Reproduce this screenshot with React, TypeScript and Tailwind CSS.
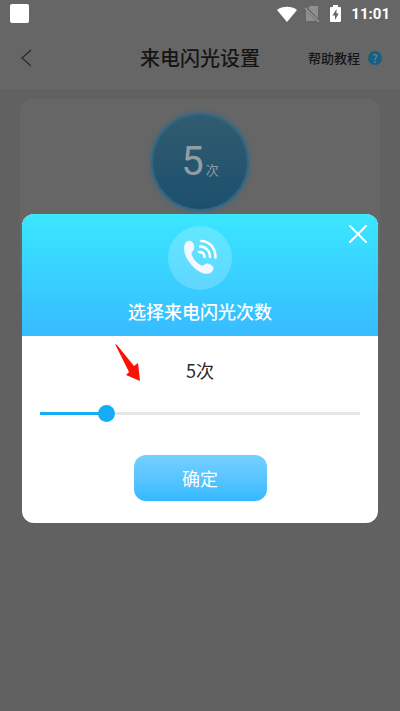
import { useState } from "react"

const MAX_FLASHES = 26

function StatusBar() {
  return (
    <div className="flex h-[27px] items-center justify-between px-2.5 text-white">
      <span className="size-[19px] rounded-xs bg-white" />
      <div className="flex items-center gap-2">
        <svg className="h-4 w-5" viewBox="0 0 20 16" fill="currentColor" aria-hidden="true">
          <path d="M10 16 0 4C5.500-.4 14.500-.4 20 4Z" />
        </svg>
        <svg className="h-4 w-[15px]" viewBox="0 0 15 16" aria-hidden="true">
          <path d="M5 0h8v15H1V4Z" fill="#8f8f8f" />
          <path d="M0 1 14 16" stroke="#666" strokeWidth="3" />
          <path d="M0 2 14 16" stroke="#9a9a9a" strokeWidth="1.300" />
        </svg>
        <svg className="mx-0.5 h-[17px] w-[11px]" viewBox="0 0 11 17" aria-hidden="true">
          <path d="M3 0h5v2h2q1 0 1 1v13q0 1-1 1H1q-1 0-1-1V3q0-1 1-1h2Z" fill="currentColor" />
          <path d="M6.500 4 2.500 10.500H5V15L8.700 8.500H6.500Z" fill="#666" />
        </svg>
        <span className="font-['Roboto',sans-serif] text-[15px] leading-5 font-bold">11:01</span>
      </div>
    </div>
  )
}

function Header() {
  return (
    <header className="grid h-[62px] grid-cols-[1fr_auto_1fr] items-center px-[18px]">
      <button type="button" aria-label="返回" className="justify-self-start text-[#303030]">
        <svg className="h-[18px] w-4" viewBox="0 0 16 18" fill="none" stroke="currentColor" strokeWidth="1.500">
          <path d="M13 1 4 9l9 8" />
        </svg>
      </button>
      <h1 className="text-xl leading-7 font-medium text-[#151515]">来电闪光设置</h1>
      <a href="#help" className="flex items-center gap-2 justify-self-end text-[13px] leading-5 font-medium whitespace-nowrap text-[#151515]">
        帮助教程
        <span className="flex size-3.5 items-center justify-center rounded-full bg-[#175f83] text-[11px] text-[#6b8996]">
          ?
        </span>
      </a>
    </header>
  )
}

function PhoneIcon() {
  return (
    <svg className="size-16" viewBox="0 0 64 64" fill="none" aria-hidden="true">
      <circle cx="32" cy="32" r="32" fill="#fff" fillOpacity=".2" />
      <path
        d="M17.500 17c1.500-2.500 5-3 6.500-1.200 2 2.400 3 5.700 1.700 8-.9 1.500-2.700 2.500-2 4.700 1.400 4.600 5.300 8.900 9.600 10.900 2 .9 3.400-1.400 5.200-1.900 2.500-.6 5.500 1.500 6.700 3.500 1 2-.8 5.200-3.500 6.300-4.500 1.700-10.200-.8-15.200-5.300C21.500 37.500 17 31 16.200 24.500c-.4-3 .1-5.600 1.300-7.500Z"
        fill="#f5f8ff"
      />
      <g stroke="#fff" strokeWidth="2.500" strokeLinecap="round">
        <path d="M33 15c8.500 0 14.500 7 14.500 16.500" />
        <path d="M32 20.500c6 0 10 4.500 10 10.500" />
        <path d="M31 26c3.500 0 5.500 2 5.500 5" />
      </g>
    </svg>
  )
}

// Red pointer that shows where to drag
function Pointer() {
  return (
    <svg className="absolute top-2 left-[93px] h-[38px] w-[26px]" viewBox="0 0 26 38" aria-hidden="true">
      <path d="M0 0 2 1 19 22l4-3 2 18-14-6 3-3Z" fill="#fb1207" />
    </svg>
  )
}

type FlashDialogProps = {
  count: number
  onChange: (count: number) => void
}

function FlashDialog({ count, onChange }: FlashDialogProps) {
  const percent = (count / MAX_FLASHES) * 100

  return (
    <div role="dialog" aria-labelledby="flash-title" className="w-full overflow-hidden rounded-xl bg-white">
      <div className="relative flex flex-col items-center gap-2 bg-linear-to-b from-[#3be7ff] to-[#37bbff] py-3 text-white">
        <PhoneIcon />
        <h2 id="flash-title" className="text-lg leading-[26px] font-medium">选择来电闪光次数</h2>
        <button type="button" aria-label="关闭" className="absolute top-[11px] right-[11px]">
          <svg className="size-[18px]" viewBox="0 0 18 18" stroke="currentColor" strokeWidth="2" strokeLinecap="round">
            <path d="m1 1 16 16M17 1 1 17" />
          </svg>
        </button>
      </div>
      <div className="relative flex flex-col items-center px-[18px] pt-5 pb-[22px]">
        <Pointer />
        <label htmlFor="flash-count" className="text-lg leading-7 text-[#2c2c2c]">{count}次</label>
        <div className="relative mt-5 flex h-[18px] w-full items-center">
          <div className="h-[3px] w-full bg-[#e5e5e5]">
            <div className="h-full bg-[#16acf5]" style={{ width: `${percent}%` }} />
          </div>
          <input
            id="flash-count"
            type="range"
            min={0}
            max={MAX_FLASHES}
            value={count}
            onChange={(e) => onChange(Number(e.target.value))}
            className="absolute inset-0 w-full appearance-none bg-transparent [&::-webkit-slider-thumb]:size-[17px] [&::-webkit-slider-thumb]:appearance-none [&::-webkit-slider-thumb]:rounded-full [&::-webkit-slider-thumb]:bg-[#16acf5]"
          />
        </div>
        <button
          type="button"
          className="mt-[33px] h-[46px] w-[133px] rounded-xl bg-linear-to-b from-[#75d0ff] to-[#33b9ff] text-lg text-white"
        >
          确定
        </button>
      </div>
    </div>
  )
}

export default function App() {
  const [count, setCount] = useState(5)

  return (
    <div className="relative min-h-screen bg-[#666] font-['Noto_Sans_CJK_SC',sans-serif]">
      <StatusBar />
      <Header />
      <main className="min-h-[calc(100vh-89px)] bg-[#616161] px-5 pt-2.5">
        <section className="flex h-[200px] justify-center rounded-xl bg-[#666] pt-4">
          <div className="flex size-[94px] items-center justify-center rounded-full bg-linear-to-b from-[#315b70] to-[#1b506d] text-[#929da2] shadow-[0_0_0_2px_#2e6887,0_0_5px_3px_#42677a]">
            <p className="flex items-baseline gap-0.5">
              <span className="font-['Roboto',sans-serif] text-[40px] leading-none">5</span>
              <span className="text-[13px]">次</span>
            </p>
          </div>
        </section>
      </main>
      <div className="absolute inset-0 flex items-start px-[22px] pt-[214px]">
        <FlashDialog count={count} onChange={setCount} />
      </div>
    </div>
  )
}
